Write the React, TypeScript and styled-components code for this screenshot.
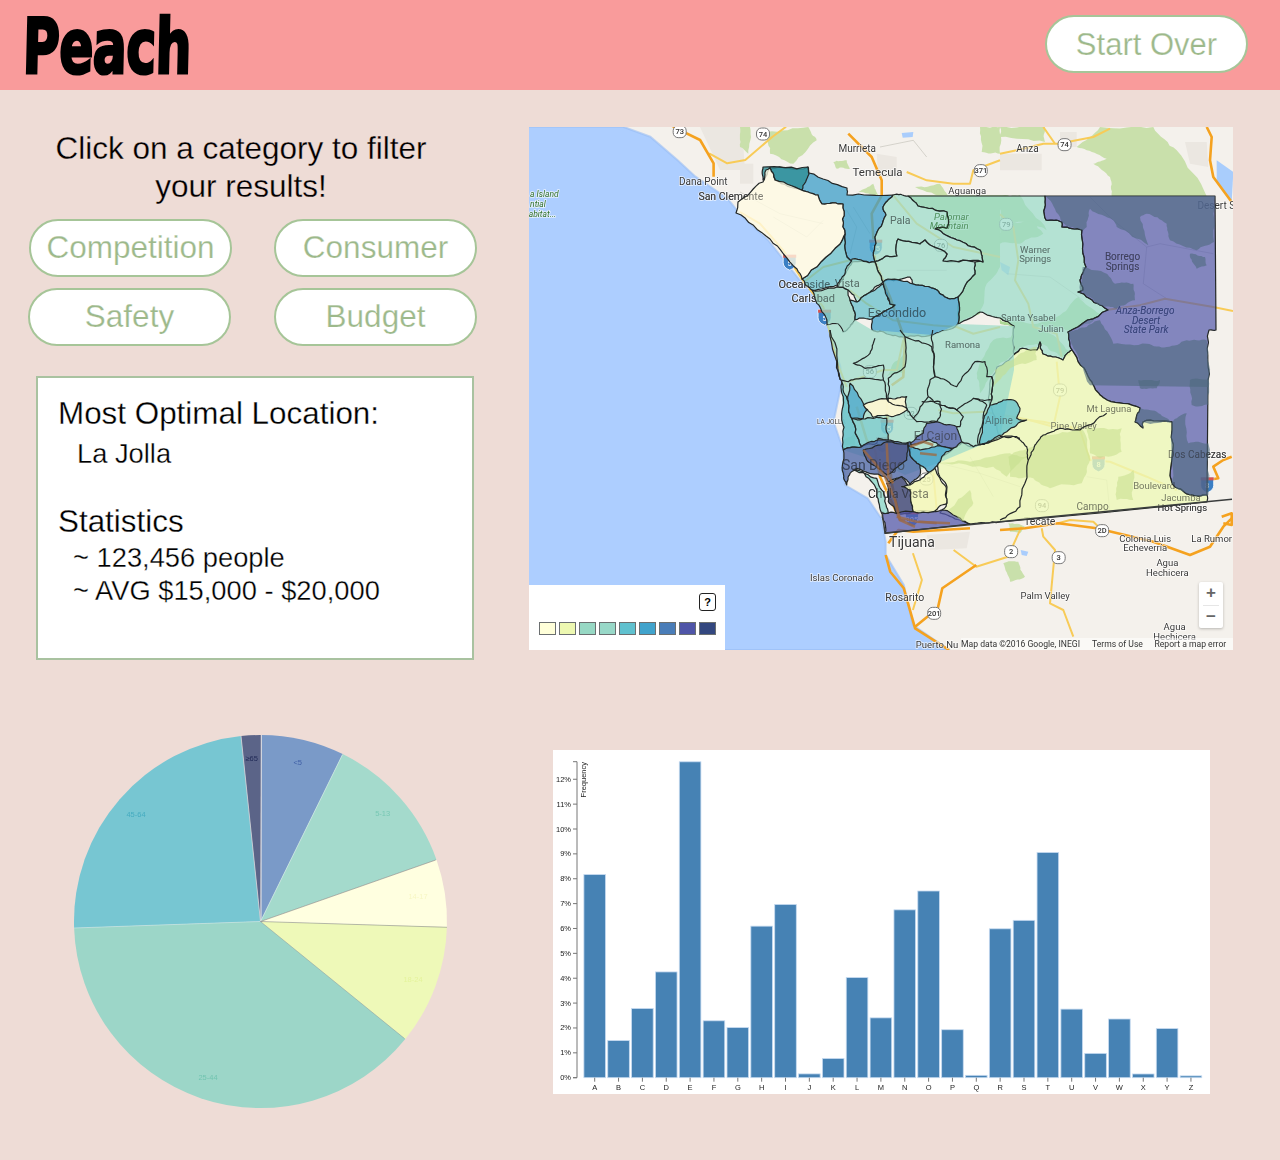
import React from "react";
import styled, { createGlobalStyle } from "styled-components";

const Global = createGlobalStyle`
  html, body { margin: 0; padding: 0; background: #eedcd6; }
  body { font-family: "Liberation Sans", Arial, sans-serif; }
`;

const Page = styled.div`
  width: 1280px;
  height: 1160px;
  overflow: hidden;
  background: #eedcd6;
`;
const Header = styled.header`
  height: 90px;
  box-sizing: border-box;
  background: #f99b9b;
  display: flex;
  align-items: center;
  justify-content: space-between;
  padding: 0 32px 2px 25px;
`;
const Logo = styled.h1`
  margin: 0;
  width: 164px;
  height: 88px;
  line-height: 94px;
  font-family: "DejaVu Sans", sans-serif;
  font-weight: 700;
  font-size: 76px;
  letter-spacing: -1px;
  color: #000;
  -webkit-text-stroke: 3px #000;
  white-space: nowrap;
  transform: translateX(-2px) scaleX(0.665) skewX(-2deg);
  transform-origin: left center;
`;
const Pill = styled.button<{ $size?: number }>`
  box-sizing: border-box;
  width: 203px;
  height: 58px;
  padding: 0;
  background: #fff;
  border: 2px solid #a6c598;
  border-radius: 29px;
  color: #9db98b;
  font-family: "Liberation Sans", Arial, sans-serif;
  font-size: ${(p) => p.$size ?? 31.5}px;
  line-height: 1;
  -webkit-text-stroke: 0.25px #fff;
`;
const TopRow = styled.section`
  display: flex;
  padding-top: 37px;
`;
const Sidebar = styled.div`
  width: 529px;
  flex: none;
  padding-top: 2px;
  box-sizing: border-box;
`;
const Prompt = styled.p`
  margin: 0;
  width: 482px;
  text-align: center;
  font-size: 31.5px;
  line-height: 38px;
  color: #000;
  -webkit-text-stroke: 0.3px #eedcd6;
`;
const FilterGrid = styled.div`
  display: grid;
  grid-template-columns: 203px 203px;
  column-gap: 42px;
  row-gap: 11px;
  margin: 14px 0 30px 29px;
`;
const ShiftedPill = styled(Pill)`
  margin-left: -1px;
`;
const InfoCard = styled.div`
  box-sizing: border-box;
  margin-left: 36px;
  width: 438px;
  height: 284px;
  padding: 17px 20px;
  background: #fff;
  border: 2px solid #a9c2a0;
  -webkit-text-stroke: 0.3px #fff;
`;
const CardHeading = styled.h2`
  margin: 0;
  font-weight: 400;
  font-size: 31.4px;
  line-height: 38px;
  color: #000;
`;
const CardPlace = styled.p`
  margin: 4px 0 32px 19px;
  font-size: 27.3px;
  line-height: 34px;
`;
const CardStats = styled.div`
  margin: 0 0 0 15px;
`;
const CardStat = styled.p`
  margin: 0;
  font-size: 27.3px;
  line-height: 33px;
`;
const MapFrame = styled.div`
  position: relative;
  width: 704px;
  height: 523px;
  overflow: hidden;
  background: #f4f1ec;
`;
const MapSvg = styled.svg`
  display: block;
  width: 704px;
  height: 523px;
  filter: blur(0.4px);
`;
const Legend = styled.div`
  position: absolute;
  left: 0;
  bottom: 0;
  width: 196px;
  height: 65px;
  box-sizing: border-box;
  padding: 8px 9px 0 10px;
  background: #fff;
  display: flex;
  flex-direction: column;
  align-items: flex-end;
`;
const HelpButton = styled.div`
  box-sizing: border-box;
  width: 17px;
  height: 18px;
  border: 1px solid #222;
  border-radius: 3px;
  font: 700 11px/16px "Liberation Sans", Arial, sans-serif;
  text-align: center;
  color: #000;
`;
const SwatchRow = styled.div`
  display: flex;
  gap: 2.5px;
  margin-top: 11px;
`;
const Swatch = styled.div<{ $c: string }>`
  box-sizing: border-box;
  width: 17.5px;
  height: 13px;
  background: ${(p) => p.$c};
  border: 1.5px solid #6b6f70;
`;
const ZoomControl = styled.div`
  position: absolute;
  left: 670px;
  top: 455px;
  width: 24px;
  height: 46px;
  background: #fff;
  border-radius: 2px;
  box-shadow: 0 1px 3px rgba(0, 0, 0, 0.25);
  display: flex;
  flex-direction: column;
  align-items: center;
`;
const ZoomKey = styled.div`
  width: 16px;
  height: 23px;
  font: 700 17px/22px "Liberation Sans", Arial, sans-serif;
  color: #666;
  text-align: center;
  & + & { border-top: 1px solid #e6e6e6; }
`;
const BottomRow = styled.section`
  display: flex;
  align-items: flex-start;
  margin-top: 70px;
`;
const PieSvg = styled.svg`
  display: block;
  flex: none;
  width: 380px;
  height: 382px;
  margin-left: 70px;
  filter: blur(0.2px);
`;
const ChartSvg = styled.svg`
  display: block;
  flex: none;
  width: 657px;
  height: 344px;
  margin: 20px 0 0 103px;
  background: #fff;
  filter: blur(0.3px);
`;

/* --------- geometry helpers for the map drawing --------- */
type Pt = number[];
const conv = (s: string, ox: number, oy: number, sx: number, sy: number) =>
  s
    .trim()
    .split(/\s+/)
    .map((pt) => {
      const [x, y] = pt.split(",").map(Number);
      return `${(ox + x / sx).toFixed(1)},${(oy + y / sy).toFixed(1)}`;
    })
    .join(" ");
const SX = 2.2085;
const P2 = (s: string) => conv(s, 528, 120, SX, 3);
const z1 = (s: string) => conv(s, 740, 127, 3, 3);
const z2 = (s: string) => conv(s, 1000, 127, 3, 3);
const z3 = (s: string) => conv(s, 820, 330, 3, 3);
const z4 = (s: string) => conv(s, 1000, 380, 3, 3);
const pt2 = (x: number, y: number) => [528 + x / SX, 120 + y / 3];

const hash = (x: number, y: number) => {
  const v = Math.sin(x * 12.9898 + y * 78.233) * 43758.5453;
  return v - Math.floor(v) - 0.5;
};
const seg = (a: Pt, b: Pt, d: number): Pt[] => {
  const len = Math.hypot(b[0] - a[0], b[1] - a[1]);
  if (d === 0 || len < 3) return [];
  const [p, q] = a[0] < b[0] || (a[0] === b[0] && a[1] < b[1]) ? [a, b] : [b, a];
  const mx = (p[0] + q[0]) / 2;
  const my = (p[1] + q[1]) / 2;
  const off = hash(Math.round(mx * 2), Math.round(my * 2)) * Math.min(len * 0.22, 3.2);
  const c = [mx - ((q[1] - p[1]) / len) * off, my + ((q[0] - p[0]) / len) * off];
  return [...seg(a, c, d - 1), c, ...seg(c, b, d - 1)];
};
const wig = (s: string, closed = true) => {
  const pts = s.trim().split(/\s+/).map((t) => t.split(",").map(Number));
  const out: Pt[] = [];
  const n = pts.length;
  for (let i = 0; i < (closed ? n : n - 1); i++) {
    const a = pts[i];
    const b = pts[(i + 1) % n];
    out.push(a);
    if (Math.hypot(b[0] - a[0], b[1] - a[1]) <= 70) out.push(...seg(a, b, 3));
  }
  if (!closed) out.push(pts[n - 1]);
  return out.map((p) => `${p[0].toFixed(1)},${p[1].toFixed(1)}`).join(" ");
};

/* --------- tile layer --------- */
const urban = [
  z1("410,80 470,90 470,150 415,150"),
  z2("0,80 125,80 125,130 0,130"),
  z2("555,45 620,45 625,120 570,110"),
  z2("180,15 230,15 230,60 180,60"),
  z3("320,615 450,605 440,655 330,660"),
  z1("0,110 40,110 40,170 0,170"),
  "700,127 742,127 745,170 720,170",
];
const greensTop = [
  z1("80,15 205,0 230,40 160,110 90,80"),
  z1("720,0 780,0 780,80 725,75"),
  z1("280,105 320,100 330,125 290,125"),
  z1("355,195 400,170 415,205"),
  z1("525,180 600,170 625,205"),
  z2("0,0 135,0 135,45 0,30"),
  z2("230,60 300,0 460,0 530,70 620,208 335,208 330,150 280,110 320,95 260,70"),
  z1("0,0 30,0 25,80 0,60"),
  z4("10,550 55,545 75,590 30,605"),
  z4("25,430 75,440 60,460 30,455"),
];
const greensUnder = [
  z1("505,205 780,205 780,420 740,470 720,560 655,590 655,510 705,440 705,405 730,405 720,370 585,305 622,303 622,255 535,238"),
  z2("0,205 60,205 140,310 100,290 10,285 0,280"),
  z2("0,285 100,285 130,320 60,350 0,350"),
  z2("235,510 300,560 270,590 205,610 170,600 100,600 150,620 215,680 185,690 125,650 60,660 30,690 35,600 0,590 0,570 90,590 170,570"),
  z3("520,30 600,20 580,70 530,110 480,190 470,130"),
  z3("220,100 260,60 255,130 200,140"),
  z3("70,330 110,310 105,345 75,345"),
];
const lakes = [
  z2("650,100 700,135 695,225 650,165"),
  z1("485,18 520,15 518,30 488,32"),
  z2("0,405 30,420 25,445 5,430"),
  z4("62,510 85,515 80,528 65,525"),
];
const water = P2(
  "0,20 210,20 270,50 330,120 370,170 440,235 470,285 530,360 600,480 640,530 665,630 690,740 692,795 675,905 695,985 700,1095 750,1135 780,1195 790,1265 790,1305 830,1395 850,1515 930,1590 0,1590"
);
const roadsOrange = [
  P2("320,20 380,60 410,130 410,170"),
  z1("325,20 395,90 425,160 425,205 395,260 405,405 450,510 495,640 490,750 455,775"),
  z2("620,0 635,30 630,100 640,150 695,225"),
  z3("205,640 235,600 280,605 450,595"),
  z4("0,450 75,445 175,430 290,445 460,485 570,525 630,500 670,440 695,415"),
  z4("625,300 655,295 640,260 670,240 695,230"),
  z4("665,410 695,400 695,435 670,430"),
  P2("790,1305 800,1355 830,1405 855,1525 930,1590"),
  P2("855,1520 905,1465 915,1405 990,1335"),
  z3("110,230 140,330 165,360 180,440 240,570 350,580"),
  z3("200,205 205,350 215,460 240,570"),
];
const roadsYellow = [
  P2("400,100 440,130 480,120 540,50 570,20"),
  z1("500,135 560,160 640,170 690,170 700,130 780,100"),
  z2("0,80 50,70 130,50 175,50 280,30 330,5"),
  z2("130,0 165,50"),
  z2("0,262 40,300 55,400 45,460 85,530 100,600 170,620 185,690"),
  z2("325,548 420,535 495,515 640,540 699,552"),
  z1("0,255 60,290 130,370 185,455 250,540 295,715 320,780"),
  z1("330,400 250,420 185,470"),
  z1("330,490 380,530 460,580 580,595 650,600 700,620 780,600"),
  z1("460,205 530,290 640,360 780,390"),
  z3("355,240 400,250 490,245 620,268 700,290 780,290"),
  z3("710,95 720,200 700,290"),
  z3("300,370 350,375"),
  z3("340,430 350,540"),
  z3("85,155 130,140 190,120 230,120 250,30"),
  z4("85,120 130,125 240,150 270,240 330,245 440,290 530,330"),
  z4("175,430 210,420 280,425 300,445"),
  z4("125,445 130,470 165,510 150,670 190,690 220,770"),
  P2("850,1300 870,1380 850,1470"),
  P2("940,1290 990,1340 1060,1310 1090,1220"),
];
const minor = [
  z1("0,195 120,260 250,290"),
  z1("100,270 200,330 250,280"),
  z1("320,250 350,300 330,380"),
  z1("340,240 390,320"),
  z1("470,430 620,430"),
  z1("420,60 520,40 560,90"),
  z2("20,440 150,450 250,520"),
  z2("270,210 340,280 440,360 480,350 640,380"),
  z2("440,360 430,470 500,515"),
  z3("360,400 480,430 600,470"),
  z3("450,380 520,500"),
  z4("260,290 320,300 330,400"),
];
type Lbl = [string, number, number, number?, string?];
const labels: Lbl[] = [
  ["Murrieta", 727, 85], ["Temecula", 772, 155, 11.5], ["Anza", 1103, 85], ["Aguanga", 970, 212, 9.5],
  ["Dana Point", 387, 184], ["San Clemente", 448, 230, 10.5], ["a Island", 36, 222, 8.5, "g"], ["ntial", 22, 252, 8.5, "g"], ["abitat...", 32, 282, 8.5, "g"],
  ["Desert S", 1520, 257, 10], ["Pala", 822, 300, 10.5], ["Palomar", 935, 290, 9.5, "g"], ["Mountain", 930, 317, 9.5, "g"],
  ["Warner", 1120, 387, 9.5], ["Springs", 1120, 415, 9.5], ["Borrego", 1313, 410, 10], ["Springs", 1313, 438, 10],
  ["Anza-Borrego", 1363, 572, 10, "d"], ["Desert", 1365, 601, 10, "d"], ["State Park", 1365, 629, 10, "d"],
  ["Oceanside", 610, 493, 11], ["Vista", 705, 489, 11], ["Carlsbad", 630, 535, 11], ["Escondido", 815, 578, 12.5],
  ["Santa Ysabel", 1105, 592, 9.5], ["Julian", 1155, 626, 9.5], ["Ramona", 960, 672, 9.5],
  ["LA JOLLA", 670, 905, 6.5], ["El Cajon", 900, 948, 12], ["Alpine", 1040, 902, 10], ["Mt Laguna", 1283, 865, 9.5],
  ["Pine Valley", 1205, 917, 9.5], ["San Diego", 763, 1035, 14], ["Chula Vista", 818, 1123, 12], ["Dos Cabezas", 1478, 1002, 10],
  ["Boulevard", 1383, 1095, 9.5], ["Jacumba", 1442, 1133, 9.5], ["Hot Springs", 1445, 1163, 9.5], ["Campo", 1247, 1160, 10],
  ["Tecate", 1130, 1203, 10.5], ["Tijuana", 848, 1265, 14], ["Colonia Luis", 1363, 1255, 9.5], ["Echeverría", 1363, 1283, 9.5],
  ["La Rumor", 1510, 1255, 9.5], ["Agua", 1412, 1328, 9.5], ["Hechicera", 1412, 1357, 9.5], ["Islas Coronado", 693, 1373, 9.5],
  ["Rosarito", 832, 1431, 10.5], ["Palm Valley", 1142, 1427, 9.5], ["Agua", 1428, 1520, 9.5], ["Hechicera", 1428, 1548, 9.5],
];
const overlaid = new Set([
  "San Clemente", "Pala", "Palomar", "Mountain", "Warner", "Springs", "Borrego", "Anza-Borrego", "Desert", "State Park",
  "Oceanside", "Vista", "Carlsbad", "Escondido", "Santa Ysabel", "Julian", "Ramona", "El Cajon", "Alpine", "Mt Laguna", "Pine Valley",
  "San Diego", "Chula Vista", "Dos Cabezas", "Boulevard", "Jacumba", "Hot Springs", "Campo",
]);
type Sh = [string, number, number, "i" | "s"];
const shields: Sh[] = [
  ["73", 335, 35, "s"], ["74", 519, 42, "s"], ["74", 1185, 74, "s"], ["371", 1000, 152, "s"], ["79", 1056, 313, "s"],
  ["76", 912, 376, "s"], ["15", 768, 380, "i"], ["5", 578, 425, "i"], ["5", 655, 590, "i"], ["56", 755, 755, "s"],
  ["79", 1175, 810, "s"], ["52", 845, 880, "s"], ["15", 793, 920, "i"], ["8", 783, 973, "i"], ["25", 880, 1077, "s"],
  ["805", 848, 1195, "i"], ["94", 1135, 1157, "s"], ["8", 1260, 1030, "i"], ["8", 1500, 1093, "i"], ["2D", 1268, 1232, "s"],
  ["2", 1067, 1295, "s"], ["3", 1172, 1313, "s"], ["201", 897, 1480, "s"],
];

/* --------- census overlay --------- */
const MINT = "#9fdccb";
const BLUE = "#43a2ca";
const TEAL = "#62bfcc";
const PURPLE = "#5358ab";
const YEL = "#eef9b8";
type Region = [string, string, number];

const midUnderlay = "827,325 838,365 842,382 843,450 880,462 905,475 938,463 1000,437 1014,370 1014,326 958,324 933,335 872,330 855,320 843,332 838,324";

const regions: Region[] = [
  /* east / north */
  ["908,196 1045,196 1046,220 1062,222 1062,227 1082,230 1086,267 1080,280 1083,290 1078,292 1100,305 1108,310 1068,332 1072,350 1063,360 1053,357 1043,354 1040,342 1037,350 1020,349 1014,355 1014,326 1000,318 980,312 958,324 958,297 975,274 975,262 983,262 980,250 957,240 935,229 947,228 947,212 918,206", MINT, 0.75],
  ["1045,196 1215,196 1216,330 1209,330 1208,380 1207,495 1190,495 1177,488 1172,483 1172,422 1143,422 1143,428 1135,422 1140,408 1107,400 1100,395 1090,380 1072,350 1068,332 1108,310 1100,305 1078,292 1083,290 1080,280 1086,267 1082,230 1062,227 1062,222 1046,220", PURPLE, 0.7],
  /* yellow south-east */
  ["1012,357 1020,349 1037,350 1040,342 1043,354 1053,357 1063,360 1072,350 1090,380 1100,395 1107,400 1140,408 1135,422 1143,428 1143,422 1172,422 1172,483 1177,488 1190,495 1207,495 1207,502 1100,513 1000,522 970,524 960,520 940,513 947,503 947,487 938,470 938,463 963,442 973,447 978,445 1000,437 990,405 992,377 997,367", YEL, 0.8],
  /* north county */
  ["808,167 809,173 847,188 847,195 893,195 883,207 886,215 875,237 875,262 852,262 847,257 845,234 843,204 822,204 818,195 808,192 775,180 770,168", BLUE, 0.78],
  ["763,167 808,167 809,174 802,190 775,180 770,168 763,180", "#2f8f96", 0.8],
  ["893,195 908,196 918,206 947,212 947,228 935,229 957,240 980,250 983,262 943,261 947,254 925,240 920,244 898,239 897,256 887,256 875,262 875,237 886,215 883,207", MINT, 0.75],
  ["875,262 887,256 897,256 898,239 920,244 925,240 947,254 943,261 975,262 975,274 958,297 950,299 937,290 913,284 910,277 888,280 883,282", MINT, 0.75],
  ["802,279 840,244 845,234 847,257 852,262 845,274 837,285 812,290", TEAL, 0.72],
  ["852,259 875,262 883,282 867,294 857,302 848,290 837,287 845,274", MINT, 0.75],
  ["812,290 837,287 848,290 850,300 855,320 843,332 838,324 827,325 820,307", "#94d2c0", 0.78],
  ["857,302 867,294 883,284 890,304 895,305 872,319 855,320 850,300", TEAL, 0.72],
  ["883,282 888,279 913,284 937,290 950,299 958,297 958,324 933,335 903,337 887,334 872,330 872,319 895,305 890,304", BLUE, 0.78],
  [midUnderlay, MINT, 0.74],
  [z3("65,155 85,215 95,265 125,350 70,360 65,270 70,200"), TEAL, 0.72],
  [z3("90,160 140,240 130,265 95,265 85,215"), BLUE, 0.72],
  [z3("95,265 160,265 200,265 205,330 175,325 170,340 125,350"), TEAL, 0.5],
  [z3("510,225 550,210 580,210 600,235 590,265 620,270 560,305 530,320 480,345 490,270"), TEAL, 0.8],
  [z3("270,340 290,320 310,310 320,280 350,275 410,290 425,335 410,350 365,350 330,330 270,345"), PURPLE, 0.72],
  [z3("70,360 125,350 175,330 270,335 270,375 300,405 300,435 270,465 245,440 205,455 195,440 110,415 90,430 80,465 70,430"), "#4a64a6", 0.76],
  [z3("130,360 200,335 265,340 260,390 200,435 170,410 140,390"), "#4c4e80", 0.62],
  [z3("265,345 300,360 370,350 400,355 365,380 330,430 300,405 270,375"), BLUE, 0.8],
  [z3("200,460 245,440 270,480 280,545 230,550 205,515"), "#414a78", 0.84],
  [z3("185,545 230,550 340,545 370,540 450,582 195,610"), PURPLE, 0.74],
  [z3("100,420 170,445 195,500 205,550 185,550 170,480 130,425"), "#9adccf", 0.9],
  [z3("245,470 270,465 300,450 345,415 378,470 380,520 340,545 280,545 270,480"), "#f3f8b9", 0.85],
  [z3("130,225 205,205 260,200 262,240 215,260 160,262"), "#fdf6d2", 0.93],
];
const creamRegion = "770,168 775,180 808,192 818,195 822,204 843,204 845,234 840,244 802,279 797,269 770,239 736,213 738,202 763,182 766,170";

const slatePatches = [
  z2("138,208 645,208 642,345 590,370 510,340 500,290 440,260 420,270 445,355 350,300 340,280 270,245 260,300 250,310 185,285 180,270"),
  z2("248,420 320,440 345,470 400,470 405,520 350,545 300,535 240,490"),
  z2("570,380 615,390 620,415 590,425"),
  z2("205,615 260,600 300,580 340,650 440,650 500,660 560,640 620,640 626,780 270,775 225,670"),
  z4("515,127 560,100 565,190 625,190 625,345 570,345 530,325 515,310"),
  z4("570,0 625,0 625,75 575,75"),
  z4("415,0 480,0 470,25 420,25"),
  z4("405,125 420,85 470,95 515,127 430,127 430,145"),
];
const yellowGreen = [
  z4("25,230 100,200 130,165 245,145 270,240 245,310 150,325 100,295 30,290"),
  z4("260,145 365,145 365,215 300,235 270,220"),
  z4("355,290 400,270 400,360 350,360"),
  z3("355,400 450,395 570,370 625,380 560,440 520,410"),
  z3("385,540 450,480 460,520 430,575"),
  z3("525,120 590,80 650,50 650,90 580,110 520,170"),
];
const browns = [
  z3("130,360 165,400 195,440 225,510 240,570 285,590"),
  z3("200,340 205,440 220,460"),
  z3("270,350 310,335 340,345"),
  z3("300,370 350,375"),
  z3("230,560 290,575 390,580"),
];
const outlineOnly = [
  "830,330 842,382",
  z3("165,25 150,70 100,100 135,115 190,105 190,150 125,145 85,155 62,150"),
  z3("30,0 60,150"),
  z3("240,0 255,20 255,110 205,145 205,215 190,150"),
  z3("255,20 335,50 345,140 330,150 325,200 280,265 260,235 205,215"),
  z3("345,140 410,170 465,95 495,95 500,140 515,140 515,210 460,205 410,240 360,225 325,200"),
  z3("305,215 360,215 360,260 350,275 290,275 280,265"),
  z3("360,225 410,240 430,260 420,290 410,290"),
  z3("460,205 500,225 490,270 475,345 460,350 425,335"),
  z3("338,0 338,60 345,140"),
  z3("515,140 515,210 510,225"),
];
const southLine = "882,512 885,533 1000,521.700 1232,499.300";
const innerYellow = [
  z3("475,345 550,320 600,325"),
  z4("0,170 50,170 80,200 85,240 60,380 0,420"),
  z4("85,240 105,195 130,165 180,145 240,150 320,100"),
];

const MapText = styled.text<{ $v?: string; $s: number }>`
  font-family: Roboto, "Liberation Sans", sans-serif;
  font-size: ${(p) => p.$s}px;
  font-style: ${(p) => (p.$v ? "italic" : "normal")};
  text-anchor: middle;
  dominant-baseline: central;
  fill: ${(p) => (p.$v === "g" ? "#2f6f2b" : p.$v === "d" ? "#2f3d63" : "#383838")};
  stroke: rgba(255, 255, 255, 0.7);
  stroke-width: 1.6px;
  paint-order: stroke;
`;
const TintedMapText = styled(MapText)`
  stroke: none;
  opacity: 0.55;
`;
const ShieldText = styled.text<{ $light?: boolean }>`
  font-family: Roboto, "Liberation Sans", sans-serif;
  font-size: 7.500px;
  font-weight: 500;
  text-anchor: middle;
  dominant-baseline: central;
  fill: ${(p) => (p.$light ? "#fff" : "#333")};
`;
const FootText = styled.text`
  font-family: Roboto, "Liberation Sans", sans-serif;
  font-size: 8.6px;
  fill: #333;
`;

const TerrainMap = () => (
  <MapSvg viewBox="529 127 704 523" aria-label="Map of San Diego County">
    <rect x="529" y="127" width="704" height="523" fill="#f4f1ec" />
    {urban.map((t, i) => <polygon key={i} points={t} fill="#ebe7e1" />)}
    {greensTop.map((t, i) => <polygon key={i} points={wig(t)} fill="#c9e0ab" />)}
    {greensUnder.map((t, i) => <polygon key={i} points={wig(t)} fill="#aed796" />)}
    {lakes.map((t, i) => <polygon key={i} points={t} fill="#a9cdfc" />)}
    <polygon points={water} fill="#adceff" />
    <polyline points={water} fill="none" stroke="#97bcf4" strokeWidth="2" opacity="0.6" />
    {minor.map((r, i) => <polyline key={i} points={r} fill="none" stroke="#8f8f84" strokeWidth="0.7" opacity="0.45" />)}
    {roadsYellow.map((r, i) => <polyline key={i} points={r} fill="none" stroke="#f8cb57" strokeWidth="2" strokeLinejoin="round" />)}
    {roadsOrange.map((r, i) => <polyline key={i} points={r} fill="none" stroke="#f5a21f" strokeWidth="2.6" strokeLinejoin="round" />)}
    {shields.map(([t, x, y, k], i) => {
      const [px, py] = pt2(x, y);
      return k === "i" ? (
        <g key={i}>
          <path d={`M${px - 6.500} ${py - 7} h13 v8 q0 5 -6.500 7.500 q-6.500 -2.500 -6.500 -7.500 z`} fill="#3b7fc4" stroke="#fff" strokeWidth="0.8" />
          <rect x={px - 6.500} y={py - 7} width="13" height="3" fill="#d9534f" />
          <ShieldText $light x={px} y={py + 1.500}>{t}</ShieldText>
        </g>
      ) : (
        <g key={i}>
          <rect x={px - 6.500} y={py - 6} width="13" height="12" rx="5" fill="#fff" stroke="#777" strokeWidth="1" />
          <ShieldText x={px} y={py}>{t}</ShieldText>
        </g>
      );
    })}
    {labels.map(([t, x, y, s, v], i) => {
      const [px, py] = pt2(x, y);
      return (
        <MapText key={i} x={px} y={py} $s={s ?? 10} $v={v}>
          {t}
        </MapText>
      );
    })}
    <MapText x={937} y={644} $s={9.5}>Puerto Nu</MapText>

    {/* census overlay */}
    {regions.map(([d, c, o], i) =>
      d === midUnderlay ? (
        <polygon key={i} points={d} fill={c} fillOpacity={o} />
      ) : (
        <polygon key={i} points={wig(d)} fill={c} fillOpacity={o} stroke="#232727" strokeWidth="1.2" strokeLinejoin="round" />
      )
    )}
    <polygon points={wig(creamRegion)} fill="#fffbe4" fillOpacity="0.8" stroke="#232727" strokeWidth="1.2" strokeLinejoin="round" />
    {slatePatches.map((t, i) => <polygon key={i} points={wig(t)} fill="#4f6a80" fillOpacity="0.62" />)}
    {yellowGreen.map((t, i) => <polygon key={i} points={wig(t)} fill="#c4df8c" fillOpacity="0.55" />)}
    {browns.map((t, i) => <polyline key={i} points={t} fill="none" stroke="#a0693f" strokeWidth="2.6" opacity="0.75" />)}
    {outlineOnly.map((l, i) => <polyline key={i} points={wig(l, false)} fill="none" stroke="#232727" strokeWidth="1.2" strokeLinejoin="round" />)}
    {innerYellow.map((l, i) => <polyline key={i} points={wig(l, false)} fill="none" stroke="#232727" strokeWidth="1.2" strokeLinejoin="round" />)}
    <polyline points={southLine} fill="none" stroke="#3a3d3d" strokeWidth="1.5" />
    {labels
      .filter(([t]) => overlaid.has(t))
      .map(([t, x, y, s, v], i) => {
        const [px, py] = pt2(x, y);
        return (
          <TintedMapText key={i} x={px} y={py} $s={s ?? 10} $v={v} aria-hidden="true">
            {t}
          </TintedMapText>
        );
      })}

    <rect x="961" y="638" width="272" height="12" fill="#fff" fillOpacity="0.55" />
    <FootText x="961" y="647">Map data ©2016 Google, INEGI</FootText>
    <FootText x="1092" y="647">Terms of Use</FootText>
    <FootText x="1154.500" y="647">Report a map error</FootText>
  </MapSvg>
);

/* --------- pie --------- */
const CX = 260.5;
const CY = 921.5;
const R = 186.5;
const toEdge = (x: number, y: number) => {
  const a = Math.atan2(y - CY, x - CX);
  return [CX + R * Math.cos(a), CY + R * Math.sin(a)];
};
const wedge = (a: number[], b: number[]) => {
  const [x1, y1] = toEdge(a[0], a[1]);
  const [x2, y2] = toEdge(b[0], b[1]);
  return `M${CX} ${CY} L${x1.toFixed(1)} ${y1.toFixed(1)} A${R} ${R} 0 0 1 ${x2.toFixed(1)} ${y2.toFixed(1)} Z`;
};
const marks = {
  a: [261.2, 735],
  b: [342.3, 755],
  c: [435.7, 860],
  d: [446.7, 927],
  e: [404.3, 1038.3],
  f: [74.3, 928],
  g: [241, 736],
};
const slices: [number[], number[], string, string, number, number, string][] = [
  [marks.a, marks.b, "#7a9ac8", "<5", 297.7, 762, "#3f5fa6"],
  [marks.b, marks.c, "#a4dacc", "5-13", 382.7, 813, "#78c8b4"],
  [marks.c, marks.d, "#ffffe0", "14-17", 418, 896, "#f7f7c4"],
  [marks.d, marks.e, "#eef9b8", "18-24", 413, 979, "#e4f39c"],
  [marks.e, marks.f, "#9cd6c8", "25-44", 208, 1077, "#72c4b0"],
  [marks.f, marks.g, "#77c6d2", "45-64", 136, 814.500, "#46acc0"],
  [marks.g, marks.a, "#5b6488", "≥65", 251.7, 758.500, "#1f2855"],
];
const PieLabel = styled.text`
  font-family: "Liberation Sans", Arial, sans-serif;
  font-size: 7.500px;
  text-anchor: middle;
  dominant-baseline: central;
`;
const Pie = () => (
  <PieSvg viewBox="70 730 380 382" aria-label="Age pie chart">
    {slices.map(([a, b, c], i) => (
      <path key={i} d={wedge(a, b)} fill={c} />
    ))}
    <line x1={CX + 0.5} y1={CY} x2={261.3} y2={735} stroke="#e9e6e6" strokeWidth="1" />
    <line x1={CX} y1={CY} x2={241} y2={736} stroke="#d7d7dc" strokeWidth="0.8" />
    <line x1={CX} y1={CY} x2={74} y2={928} stroke="#cfeae6" strokeWidth="0.6" />
    <line x1={CX} y1={CY} x2={342.3} y2={755} stroke="#cfeae6" strokeWidth="0.7" />
    <line x1={CX} y1={CY} x2={435.7} y2={860} stroke="#858585" strokeWidth="0.6" />
    <line x1={CX} y1={CY} x2={447} y2={927.300} stroke="#6a6e80" strokeWidth="0.45" />
    <line x1={CX} y1={CY} x2={404.500} y2={1038.500} stroke="#7d8a88" strokeWidth="0.4" />
    {slices.map(([, , , t, x, y, c], i) => (
      <PieLabel key={i} x={x} y={y} fill={c}>{t}</PieLabel>
    ))}
  </PieSvg>
);

/* --------- bars --------- */
const freq = [8.167, 1.492, 2.782, 4.253, 12.702, 2.288, 2.015, 6.094, 6.966, 0.153, 0.772, 4.025, 2.406, 6.749, 7.507, 1.929, 0.095, 5.987, 6.327, 9.056, 2.758, 0.978, 2.36, 0.15, 1.974, 0.074];
const Y0 = 1077.7;
const UNIT = 24.87;
const XA = 594.7;
const STEP = 23.85;
const ChartLabel = styled.text<{ $anchor?: string }>`
  font-family: "Liberation Sans", Arial, sans-serif;
  font-size: 7.500px;
  fill: #222;
  text-anchor: ${(p) => p.$anchor ?? "middle"};
`;
const Bars = () => (
  <ChartSvg viewBox="553 750 657 344" aria-label="Letter frequency chart">
    {freq.map((f, i) => {
      const h = f * UNIT;
      const cx = XA + i * STEP;
      return (
        <g key={i}>
          <rect x={cx - 10.800} y={Y0 - h} width={21.6} height={h} fill="#4682b4" stroke="#c6daf0" strokeWidth="0.8" />
          <line x1={cx} x2={cx} y1={Y0} y2={Y0 + 4} stroke="#777" strokeWidth="1" />
          <ChartLabel x={cx} y={1089.500}>{String.fromCharCode(65 + i)}</ChartLabel>
        </g>
      );
    })}
    <polyline points={`573,761.700 577,761.700 577,${Y0} 573,${Y0}`} fill="none" stroke="#777" strokeWidth="1" />
    {Array.from({ length: 13 }, (_, i) => (
      <g key={i}>
        <line x1={573} x2={577} y1={Y0 - i * UNIT} y2={Y0 - i * UNIT} stroke="#777" strokeWidth="1" />
        <ChartLabel $anchor="end" x={571} y={Y0 - i * UNIT + 2.500}>{i}%</ChartLabel>
      </g>
    ))}
    <ChartLabel $anchor="end" transform="translate(586 762) rotate(-90)" x={0} y={0}>Frequency</ChartLabel>
  </ChartSvg>
);

const swatches = ["#ffffd9", "#edf8b1", "#97d8c4", "#98d8c8", "#60c1cf", "#41a3cc", "#4a7db8", "#4f55a8", "#33477f"];

export default function App() {
  return (
    <Page>
      <Global />
      <Header>
        <Logo>Peach</Logo>
        <Pill $size={31}>Start Over</Pill>
      </Header>
      <TopRow>
        <Sidebar>
          <Prompt>
            Click on a category to filter
            <br />
            your results!
          </Prompt>
          <FilterGrid>
            <Pill>Competition</Pill>
            <Pill>Consumer</Pill>
            <ShiftedPill>Safety</ShiftedPill>
            <Pill>Budget</Pill>
          </FilterGrid>
          <InfoCard>
            <CardHeading>Most Optimal Location:</CardHeading>
            <CardPlace>La Jolla</CardPlace>
            <CardHeading>Statistics</CardHeading>
            <CardStats>
              <CardStat>~ 123,456 people</CardStat>
              <CardStat>~ AVG $15,000 - $20,000</CardStat>
            </CardStats>
          </InfoCard>
        </Sidebar>
        <MapFrame>
          <TerrainMap />
          <ZoomControl>
            <ZoomKey>+</ZoomKey>
            <ZoomKey>−</ZoomKey>
          </ZoomControl>
          <Legend>
            <HelpButton>?</HelpButton>
            <SwatchRow>
              {swatches.map((c) => (
                <Swatch key={c} $c={c} />
              ))}
            </SwatchRow>
          </Legend>
        </MapFrame>
      </TopRow>
      <BottomRow>
        <Pie />
        <Bars />
      </BottomRow>
    </Page>
  );
}
